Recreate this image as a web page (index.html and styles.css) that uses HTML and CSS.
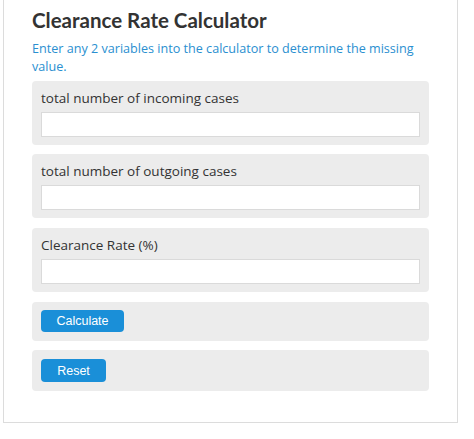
FILE: index.html
```html
<!DOCTYPE html>
<html>
<head>
<meta charset="utf-8">
<link rel="stylesheet" href="styles.css">
</head>
<body>
<div class="calc">
  <h1 class="title">Clearance Rate Calculator</h1>
  <p class="intro">Enter any 2 variables into the calculator to determine the missing value.</p>
  <div class="panel">
    <label class="label">total number of incoming cases</label>
    <input class="field" type="text">
  </div>
  <div class="panel">
    <label class="label">total number of outgoing cases</label>
    <input class="field" type="text">
  </div>
  <div class="panel panel-spaced">
    <label class="label">Clearance Rate (%)</label>
    <input class="field" type="text">
  </div>
  <div class="panel panel-btn panel-spaced">
    <button class="btn btn-calc">Calculate</button>
  </div>
  <div class="panel panel-btn panel-reset">
    <button class="btn btn-reset">Reset</button>
  </div>
</div>
</body>
</html>
```

FILE: styles.css
```css
html, body {
  margin: 0;
  padding: 0;
  background: #fff;
}
body {
  padding: 0 16px 0 3px;
  font-family: "Open Sans", "DejaVu Sans", sans-serif;
}
.calc {
  border: 1px solid #dcdcdc;
  border-top: none;
  padding: 8px 28px 31px 28px;
  display: flex;
  flex-direction: column;
  gap: 9px;
}
.title {
  margin: 0;
  font-family: Lato, "Open Sans", sans-serif;
  font-weight: 700;
  font-size: 20.5px;
  line-height: 24px;
  color: #333;
}
.intro {
  margin: -1px 0 -4px 0;
  font-size: 12.6px;
  line-height: 18px;
  color: #2a8fd0;
}
.panel {
  background: #ececec;
  border-radius: 4px;
  padding: 8px 9px 8px 9px;
  display: flex;
  flex-direction: column;
  gap: 5px;
}
.panel-spaced {
  margin-top: 1px;
}
.label {
  font-size: 13.5px;
  line-height: 18px;
  color: #333;
}
.field {
  box-sizing: border-box;
  height: 25px;
  width: 100%;
  margin: 0;
  border: 1px solid #dadada;
  background: #fff;
  border-radius: 0;
}
.panel-btn {
  padding: 8px 9px 9px 9px;
  align-items: flex-start;
}
.panel-reset {
  padding: 9px 9px 9px 9px;
}
.btn {
  background: #1a8fd8;
  color: #fff;
  border: none;
  border-radius: 4px;
  height: 22px;
  padding: 0;
  font-family: "Liberation Sans", Arial, sans-serif;
  font-size: 12.5px;
  cursor: pointer;
}
.btn-calc { width: 83px; }
.btn-reset { width: 65px; height: 23px; }
```
